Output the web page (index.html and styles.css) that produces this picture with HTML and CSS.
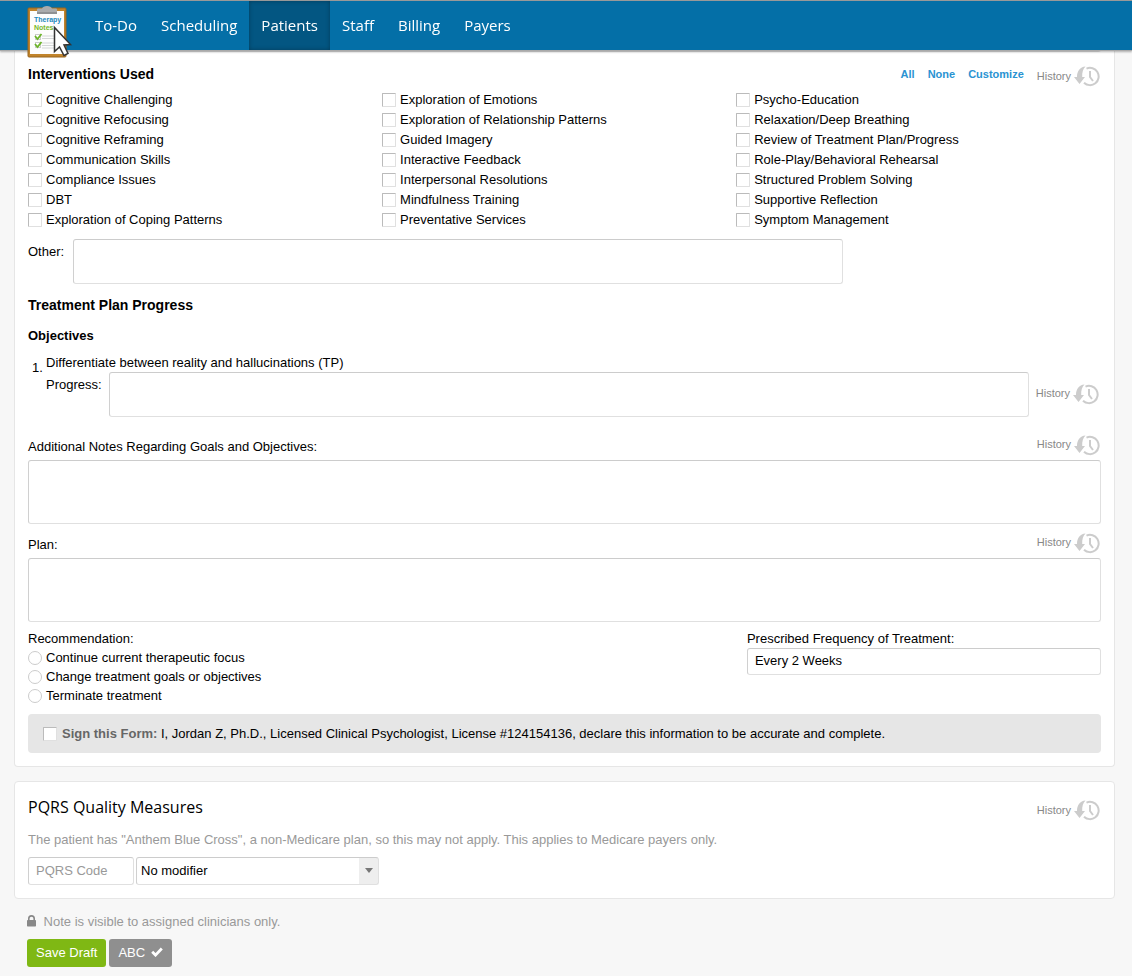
FILE: index.html
```html
<!DOCTYPE html>
<html lang="en">
<head>
<meta charset="UTF-8">
<meta name="viewport" content="width=device-width, initial-scale=1.0">
<title>TherapyNotes</title>
<link rel="stylesheet" href="styles.css">
</head>
<body>
<svg class="sprite" aria-hidden="true">
  <symbol id="icon-history" viewBox="0 0 26 21">
    <path d="M12.500 2.600A8.640 8.640 0 1 1 10 16.700" fill="none" stroke="#ccc" stroke-width="2"/>
    <path d="M16 5v6l3 4" fill="none" stroke="#ccc" stroke-width="2"/>
    <path d="M11.500.5C6 1 3 5 3 11H0l5.500 7 5.500-7H8.200C8 6.500 9 3 11.500.5z" fill="#ccc"/>
  </symbol>
</svg>

<header>
  <a class="logo" href="#" aria-label="TherapyNotes">
    <svg width="46" height="54" viewBox="0 0 46 54">
      <rect x="1" y="3" width="38" height="49" rx="1" fill="#c1842c" stroke="#98651d"/>
      <rect x="3" y="6" width="34" height="43" fill="#fdfdfd"/>
      <path d="M10 9V4.500q0-1 1-1h4Q16 1 20 1t5 2.500h4q1 0 1 1V9z" fill="#a9abad"/>
      <path d="M10 7h20v2H10z" fill="#8f9193"/>
      <text x="7" y="17" class="logo-blue">Therapy</text>
      <text x="7" y="25" class="logo-green">Notes</text>
      <path d="M15 31h13M15 33.500h14M15 38h15M15 40.500h15M15 43h15" stroke="#d5d7d8"/>
      <rect x="8.500" y="29.500" width="5" height="5" fill="#fff" stroke="#ccc"/>
      <rect x="8.500" y="37.500" width="5" height="5" fill="#fff" stroke="#ccc"/>
      <path d="M8 31l2.500 3 4-5M8 39l2.500 3 4-5" fill="none" stroke="#6db52a" stroke-width="1.800"/>
      <path d="M27.500 22.500v24l5-4.500 4.500 8.500 4-2-4-8.500 6.500-.5z" fill="#fff" stroke="#333" stroke-width="1.500"/>
    </svg>
  </a>
  <nav>
    <a href="#">To-Do</a>
    <a href="#">Scheduling</a>
    <a class="active" href="#">Patients</a>
    <a href="#">Staff</a>
    <a href="#">Billing</a>
    <a href="#">Payers</a>
  </nav>
</header>

<main>
  <section class="card note">
    <textarea class="short" aria-label="Notes"></textarea>

    <div class="title-row">
      <h2>Interventions Used</h2>
      <div class="links">
        <a href="#">All</a>
        <a href="#">None</a>
        <a href="#">Customize</a>
        <a class="history" href="#">History <svg><use href="#icon-history"/></svg></a>
      </div>
    </div>

    <div class="checks">
      <div>
        <label><input type="checkbox">Cognitive Challenging</label>
        <label><input type="checkbox">Cognitive Refocusing</label>
        <label><input type="checkbox">Cognitive Reframing</label>
        <label><input type="checkbox">Communication Skills</label>
        <label><input type="checkbox">Compliance Issues</label>
        <label><input type="checkbox">DBT</label>
        <label><input type="checkbox">Exploration of Coping Patterns</label>
      </div>
      <div>
        <label><input type="checkbox">Exploration of Emotions</label>
        <label><input type="checkbox">Exploration of Relationship Patterns</label>
        <label><input type="checkbox">Guided Imagery</label>
        <label><input type="checkbox">Interactive Feedback</label>
        <label><input type="checkbox">Interpersonal Resolutions</label>
        <label><input type="checkbox">Mindfulness Training</label>
        <label><input type="checkbox">Preventative Services</label>
      </div>
      <div>
        <label><input type="checkbox">Psycho-Education</label>
        <label><input type="checkbox">Relaxation/Deep Breathing</label>
        <label><input type="checkbox">Review of Treatment Plan/Progress</label>
        <label><input type="checkbox">Role-Play/Behavioral Rehearsal</label>
        <label><input type="checkbox">Structured Problem Solving</label>
        <label><input type="checkbox">Supportive Reflection</label>
        <label><input type="checkbox">Symptom Management</label>
      </div>
    </div>

    <div class="inline-field other">
      <label for="other">Other:</label>
      <textarea class="short" id="other"></textarea>
    </div>

    <h2>Treatment Plan Progress</h2>
    <h3>Objectives</h3>
    <ol class="objectives">
      <li>
        <div class="objective">
          <p>Differentiate between reality and hallucinations (TP)</p>
          <div class="inline-field">
            <label for="progress">Progress:</label>
            <textarea class="short" id="progress"></textarea>
            <a class="history" href="#">History <svg><use href="#icon-history"/></svg></a>
          </div>
        </div>
      </li>
    </ol>

    <div class="field">
      <div class="field-head">
        <label for="additional">Additional Notes Regarding Goals and Objectives:</label>
        <a class="history" href="#">History <svg><use href="#icon-history"/></svg></a>
      </div>
      <textarea id="additional"></textarea>
    </div>

    <div class="field">
      <div class="field-head">
        <label for="plan">Plan:</label>
        <a class="history" href="#">History <svg><use href="#icon-history"/></svg></a>
      </div>
      <textarea id="plan"></textarea>
    </div>

    <div class="split">
      <fieldset>
        <legend>Recommendation:</legend>
        <label><input type="radio" name="rec">Continue current therapeutic focus</label>
        <label><input type="radio" name="rec">Change treatment goals or objectives</label>
        <label><input type="radio" name="rec">Terminate treatment</label>
      </fieldset>
      <div class="frequency">
        <label for="frequency">Prescribed Frequency of Treatment:</label>
        <input type="text" id="frequency" value="Every 2 Weeks">
      </div>
    </div>

    <label class="sign">
      <input type="checkbox">
      <span><b>Sign this Form:</b> I, Jordan Z, Ph.D., Licensed Clinical Psychologist, License #124154136, declare this information to be accurate and complete.</span>
    </label>
  </section>

  <section class="card pqrs">
    <div class="title-row">
      <h1>PQRS Quality Measures</h1>
      <a class="history" href="#">History <svg><use href="#icon-history"/></svg></a>
    </div>
    <p class="muted">The patient has "Anthem Blue Cross", a non-Medicare plan, so this may not apply. This applies to Medicare payers only.</p>
    <div class="code-row">
      <input type="text" placeholder="PQRS Code" aria-label="PQRS Code">
      <div class="select">
        <select aria-label="Modifier"><option>No modifier</option></select>
      </div>
    </div>
  </section>

  <footer>
    <p class="muted">
      <svg width="9" height="12" viewBox="0 0 9 12"><path d="M1.800 5.500V3.600a2.700 2.700 0 0 1 5.400 0v1.900" fill="none" stroke="#888" stroke-width="1.600"/><rect y="5" width="9" height="6.500" rx=".7" fill="#888"/></svg>
      Note is visible to assigned clinicians only.
    </p>
    <div class="buttons">
      <button class="save" type="button">Save Draft</button>
      <button class="spell" type="button">ABC <svg width="12" height="10" viewBox="0 0 12 10"><path d="M1.200 4.800l3.300 3.300L10.800 1.500" fill="none" stroke="#fff" stroke-width="2.800"/></svg></button>
    </div>
  </footer>
</main>
</body>
</html>
```

FILE: styles.css
```css
* {box-sizing:border-box;}
body {margin:0;background:#f7f7f7;color:#000;font:13px/20px "Liberation Sans",Arial,sans-serif;}
h1,h2,h3,p,ol,fieldset {margin:0;padding:0;}
a {text-decoration:none;}
.sprite {display:none;}

header {
  position:fixed;top:0;left:0;right:0;z-index:10;height:51px;display:flex;padding-left:27px;
  background:#046fa7;border-top:1px solid #999;border-bottom:1px solid #aaa;box-shadow:0 1px 2px rgba(0,0,0,0.3);
}
.logo {width:56px;height:54px;margin-top:4px;}
.logo svg {display:block;}
.logo text {font:bold 7px "Liberation Sans",sans-serif;}
.logo-blue {fill:#2389bd;}
.logo-green {fill:#76b82a;}
nav {display:flex;}
nav a {padding:0 12px;font:15px/49px "Open Sans",sans-serif;color:#fff;}
nav a.active {background:#035682;box-shadow:inset 0 0 4px rgba(0,0,0,0.3);}

main {padding:0 17px 9px 14px;}
.card {background:#fff;border:1px solid #e6e6e6;border-radius:4px;padding:13px;}
.note {padding-top:7px;border-top:0;}
textarea,input[type=text],select {
  display:block;width:100%;border:1px solid #e0e0e0;border-top-color:#ccc;border-left-color:#d0d0d0;border-radius:3px;
  background:#fff;color:#000;font:inherit;outline:none;resize:none;
}
textarea {height:64px;padding:6px;}
textarea.short {height:45px;}
input[type=text] {height:27px;padding:0 7px 2px;}
::placeholder {color:#999;opacity:1;}
input[type=checkbox],input[type=radio] {
  appearance:none;flex:none;width:14px;height:14px;margin:0;border:1px solid #e0e0e0;border-top-color:#bbb;border-left-color:#bbb;background:#fff;border-radius:1px;
}
input[type=radio] {border-radius:50%;border-color:#ccc;}

h2 {font-size:14px;}
h3 {font-size:13px;}
.title-row,.field-head {display:flex;justify-content:space-between;align-items:center;}
.title-row {align-items:flex-start;}
.note .title-row {margin-top:12px;}
.links {display:flex;gap:13px;font-size:11px;}
.links a {color:#2a93d2;font-weight:bold;}
a.history,.links a.history {display:flex;align-items:center;gap:3px;margin-right:1px;font-size:11px;font-weight:normal;color:#888;}
.history svg {width:26px;height:21px;margin-top:2px;}

.checks {display:grid;grid-template-columns:repeat(3,1fr);width:99%;margin-top:3px;}
.checks label,fieldset label {display:flex;align-items:center;gap:4px;}
.inline-field {display:flex;gap:7px;}
.other {gap:9px;margin:9px 0 11px;}
.inline-field label {padding-top:3px;}
.other textarea {width:770px;}
h3 {margin-top:11px;}
.objectives {list-style:none;margin-top:7px;}
.objectives li {display:flex;counter-increment:objective;}
.objectives li::before {content:counter(objective) ".";width:14px;padding:5px 0 0 4px;}
.objective {flex:1;line-height:19px;}
.objectives .history {margin-right:2px;padding-bottom:3px;}
.field {margin-top:14px;}
.field + .field {margin-top:5px;}
.field-head {padding-bottom:3px;}
.field-head label {padding-top:6px;}

.split {display:flex;justify-content:space-between;margin-top:7px;line-height:19px;}
fieldset {border:0;}
legend {padding:0;}
.frequency {width:33%;}
.sign {display:flex;align-items:center;gap:5px;margin-top:9px;padding:10px 14px 9px 15px;background:#e6e6e6;border-radius:4px;}
.sign b {color:#666;}

.pqrs {margin-top:14px;}
h1 {font:16px/24px "Open Sans",sans-serif;}
.muted {color:#999;}
.pqrs .history {padding-top:3px;}
.pqrs .muted {margin:9px 0 7px;}
.code-row {display:flex;gap:2px;}
.code-row > input[type=text] {width:106px;height:28px;}
.select {position:relative;width:243px;}
select {appearance:none;height:28px;padding:0 4px 1px;background:linear-gradient(#eee,#eee) right/19px 100% no-repeat #fff;}
.select::after {content:"";position:absolute;right:6px;top:11px;border:4px solid transparent;border-top:5px solid #777;border-bottom:0;pointer-events:none;}

footer {padding:13px 13px 0;}
footer .muted svg {margin-right:4px;vertical-align:-1px;}
.buttons {display:flex;gap:3px;margin-top:7px;}
button {height:28px;padding:0 9px 1px;border:0;border-radius:3px;color:#fff;font:inherit;cursor:pointer;}
.save {background:#7fb814;}
.spell {background:#8f8f8f;}
.spell svg {margin-left:2px;}
```
